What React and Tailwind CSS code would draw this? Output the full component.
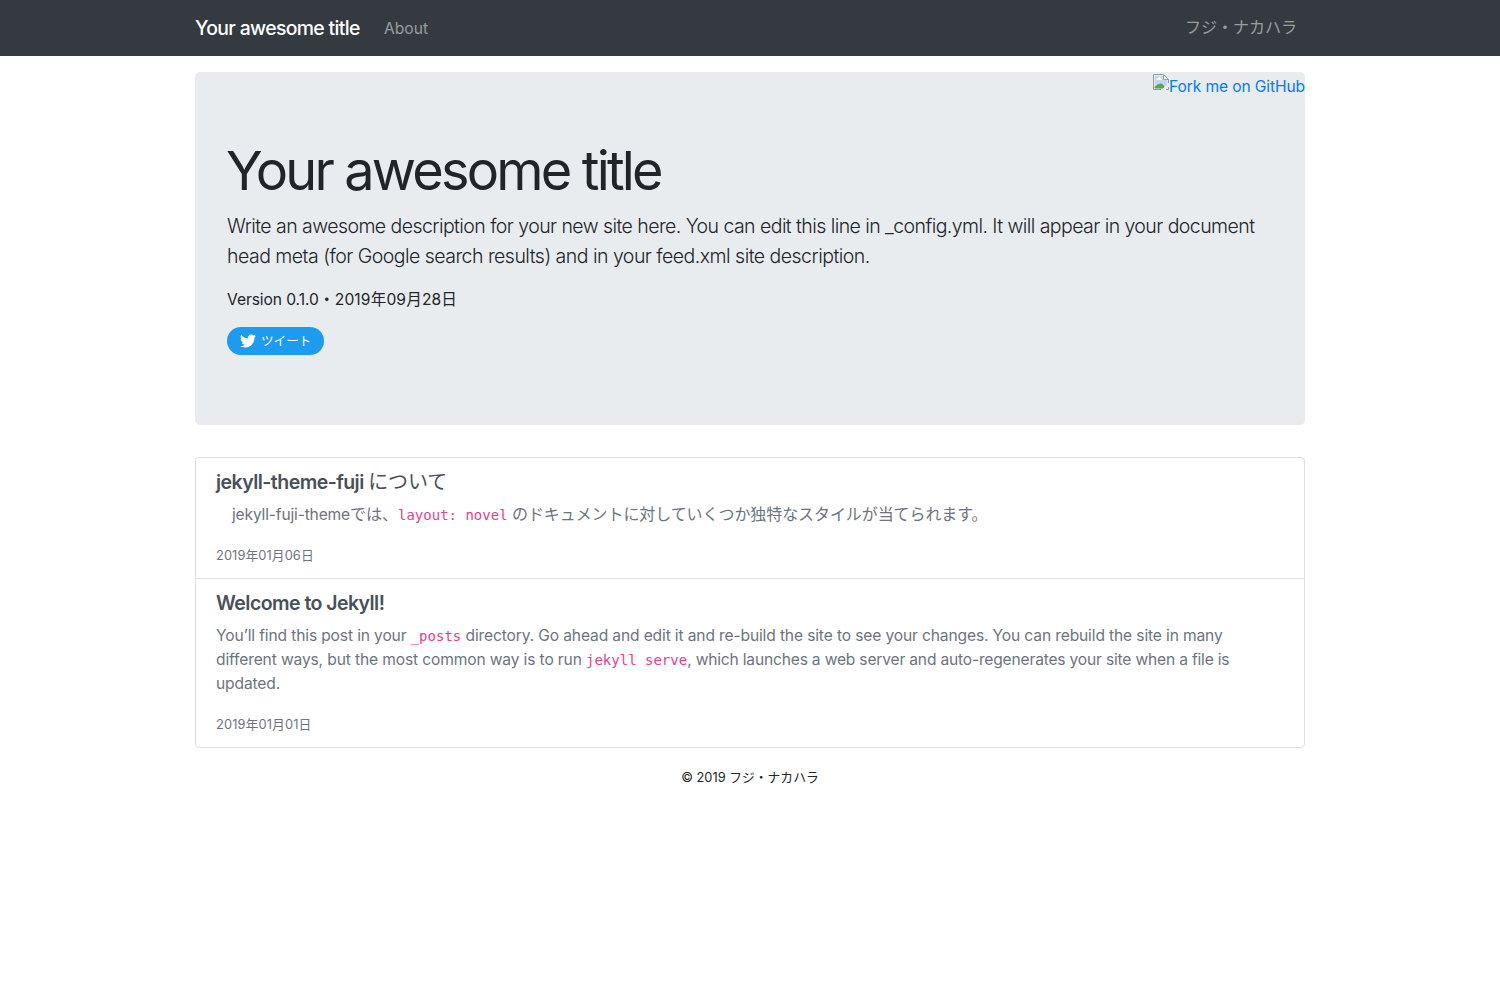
import { FaTwitter } from "react-icons/fa";

const Code = ({ children }) => (
  <code className="font-['DejaVu_Sans_Mono','Liberation_Mono',monospace] text-[14px] leading-none tracking-normal text-[#e83e8c]">{children}</code>
);

function BrokenImage() {
  return (
    <svg width="16" height="16" viewBox="0 0 16 16" className="shrink-0">
      <path d="M.5.5h10l5 5v10H.5z" fill="#fff" />
      <path d="M1.500 1.500h8.500v4.500h4.500v8.500h-13z" fill="#c3d5f7" />
      <path d="M3 6q0-1.500 1.500-1.500Q5 3 6.500 3T8 4.500Q9 4.500 9 6z" fill="#fff" />
      <path d="M1.500 14.500V13Q4.500 9.500 7.500 9.500T12 14.500z" fill="#50ad3c" />
      <path d="M16 8.500 8.500 16H11.500l4.500-4.500z" fill="#e9ecef" />
      <path d="M.5 15.500V.5h10l5 5V9M10.500.5v5h5M.5 15.500H8M13 15.500h2.500V13" fill="none" stroke="#9a9a9a" />
    </svg>
  );
}

export default function App() {
  return (
    <div className="min-h-screen bg-white font-['Inter','Noto_Sans_CJK_JP',sans-serif] text-[15.6px] leading-6 text-[#212529]">
      <nav className="h-14 bg-[#343a40]">
        <div className="mx-auto flex h-14 w-[1110px] items-center">
          <a className="w-[165px] whitespace-nowrap text-[19.4px] font-[450] leading-[30px] tracking-[-0.64px] text-white">Your awesome title</a>
          <a className="ml-6 pt-0.5 text-white/50">About</a>
          <a className="ml-auto mr-2 pb-0.5 text-base text-white/50">フジ・ナカハラ</a>
        </div>
      </nav>
      <main className="mx-auto w-[1110px] pt-4">
        <header className="relative h-[353px] rounded-[4.8px] bg-[#e9ecef] px-8 pt-16">
          <a className="absolute right-0 top-0 flex items-start pt-[2px] tracking-[-0.12px] text-[#007bff]"><BrokenImage /><span className="pt-px">Fork me on GitHub</span></a>
          <h1 className="-ml-px mb-[7px] whitespace-nowrap pt-px text-[54px] font-[390] leading-[67px] tracking-[-2.8px]">Your awesome title</h1>
          <p className="mb-[17px] whitespace-nowrap text-[19.5px] font-[350] leading-[30px]"><span className="tracking-[-0.56px]">Write an awesome description for your new site here. You can edit this line in _config.yml. It will appear in your document</span><br /><span className="tracking-[-0.52px]">head meta (for Google search results) and in your feed.xml site description.</span></p>
          <p className="mb-[15px]"><span className="tracking-[-0.08px]">Version 0.1.0</span><span className="text-base leading-none">・</span><span className="tracking-[0.14px]">2019年09月28日</span></p>
          <a className="flex h-7 w-[97px] items-center gap-[5px] rounded-full bg-[#1d9bf0] pl-[13px] text-[12.6px] text-white"><FaTwitter size={16} /><span>ツイート</span></a>
        </header>
        <section className="mt-8 rounded border border-[#dfdfdf]">
          <article className="h-[120px] px-5 pt-3">
            <h2 className="mb-[9px] text-[19.5px] font-semibold leading-6 tracking-[-0.54px] text-[#495057]">jekyll-theme-fuji <span className="text-[20px] font-normal leading-none tracking-[-0.1px]">について</span></h2>
            <p className="mb-[17px] whitespace-nowrap pl-4 text-[#6c757d]"><span className="tracking-[-0.17px]">jekyll-fuji-theme</span><span className="text-base leading-none">では、</span><Code>layout: novel</Code> <span className="text-base leading-none tracking-[-0.08px]">のドキュメントに対していくつか独特なスタイルが当てられます。</span></p>
            <p className="text-[12.8px] tracking-[0.1px] text-[#6c757d]">2019年01月06日</p>
          </article>
          <article className="h-[169px] border-t border-[#dfdfdf] px-5 pt-3">
            <h2 className="mb-[9px] text-[19.5px] font-semibold leading-6 tracking-[-0.55px] text-[#495057]">Welcome to Jekyll!</h2>
            <p className="mb-[17px] whitespace-nowrap tracking-[-0.14px] text-[#6c757d]">You’ll find this post in your <Code>_posts</Code> directory. Go ahead and edit it and re-build the site to see your changes. You can rebuild the site in many<br />different ways, but the most common way is to run <Code>jekyll serve</Code><span className="tracking-[-0.19px]">, which launches a web server and auto-regenerates your site when a file is</span><br />updated.</p>
            <p className="text-[12.8px] tracking-[0.14px] text-[#6c757d]">2019年01月01日</p>
          </article>
        </section>
        <footer className="mt-[18px] text-center text-[12.8px]">© 2019 フジ・ナカハラ</footer>
      </main>
    </div>
  );
}
